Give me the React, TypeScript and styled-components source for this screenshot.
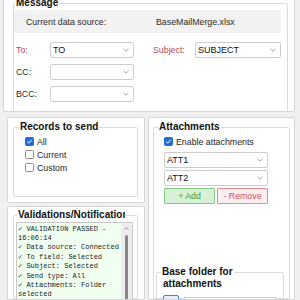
import React from 'react';
import styled, { createGlobalStyle } from 'styled-components';

const GlobalStyle = createGlobalStyle`
  html, body {
    margin: 0;
    padding: 0;
  }
  body {
    font-family: "Liberation Sans", Arial, sans-serif;
    font-size: 8.8px;
    color: #1e1e1e;
    background: #f0f0f0;
  }
`;

const Screen = styled.div`
  width: 300px;
  height: 300px;
  overflow: hidden;
  background: #f0f0f0;
  display: flex;
  flex-direction: column;
  gap: 5px;
`;

const Panel = styled.div<{ $height?: number }>`
  box-sizing: border-box;
  background: #fff;
  border: 1px solid #d6d6d6;
  border-radius: 2px;
  overflow: hidden;
  display: flex;
  flex-direction: column;
  ${p => (p.$height ? `height: ${p.$height}px; flex: none;` : 'flex: 1; min-height: 0;')}
`;

const TopPanel = styled(Panel)`
  margin: -10px 0 0 3px;
  width: 292px;
  padding-left: 9px;
  padding-top: 6px;
`;

const GroupBox = styled.fieldset`
  box-sizing: border-box;
  margin: 0;
  padding: 0;
  border: 1px solid #dadada;
  border-radius: 2px;
  min-width: 0;
  display: flex;
  flex-direction: column;
`;

const Legend = styled.legend<{ $indent: number; $clip?: number }>`
  margin-left: ${p => p.$indent}px;
  padding: 0 1px;
  font-weight: bold;
  font-size: 10px;
  line-height: 12px;
  color: #111;
  white-space: nowrap;
  overflow: hidden;
  ${p => (p.$clip ? `max-width: ${p.$clip}px;` : '')}
`;

const DataSource = styled.div`
  margin-top: 1px;
  height: 23px;
  width: 267px;
  background: #f2f2f2;
  display: grid;
  grid-template-columns: 130px 1fr;
  align-items: center;
  padding-left: 12px;
  box-sizing: border-box;
  color: #2a2a2a;
`;

const FieldGrid = styled.div`
  margin: 9px 0 20px 2px;
  display: grid;
  grid-template-columns: 34px 84px 19px 42px 86px;
  grid-auto-rows: 16px;
  row-gap: 6px;
  align-items: center;
`;

const Label = styled.span<{ $required?: boolean }>`
  color: ${p => (p.$required ? '#b84a4c' : '#2a2a2a')};
`;

const ComboBox = styled.div<{ $width?: number }>`
  box-sizing: border-box;
  height: 16px;
  ${p => (p.$width ? `width: ${p.$width}px;` : '')}
  border: 1px solid #cdcdcd;
  border-radius: 2px;
  background: #fff;
  display: flex;
  align-items: center;
  justify-content: space-between;
  padding: 0 4px 0 2px;
  font-size: 9px;
  color: #111;
`;

const Chevron = () => (
  <svg width="6" height="4" viewBox="0 0 6 4">
    <path d="M0.5 0.8 L3 3.2 L5.5 0.8" fill="none" stroke="#9a9a9a" strokeWidth="0.9" />
  </svg>
);

const Combo = ({ value, width }: { value?: string; width?: number }) => (
  <ComboBox $width={width}>
    <span>{value}</span>
    <Chevron />
  </ComboBox>
);

const Lower = styled.div`
  flex: 1;
  min-height: 0;
  display: flex;
  gap: 3px;
  margin-left: 7px;
`;

const LeftColumn = styled.div`
  width: 138px;
  display: flex;
  flex-direction: column;
  gap: 3px;
`;

const RecordsPanel = styled(Panel)`
  padding: 3px 6px 5px 5px;
`;

const ValidationPanel = styled(Panel)`
  padding: 2px 6px 0 5px;
`;

const RightPanel = styled(Panel)`
  width: 147px;
  flex: none;
  padding: 3px 4px 0 4px;
`;

const FillGroup = styled(GroupBox)`
  flex: 1;
  min-height: 0;
`;

const CheckList = styled.div<{ $indent: number }>`
  margin-top: 2px;
  padding-left: ${p => p.$indent}px;
  display: flex;
  flex-direction: column;
`;

const CheckRow = styled.label`
  height: 13px;
  display: flex;
  align-items: center;
  gap: 3px;
  color: #1e1e1e;
`;

const Box = styled.span<{ $checked?: boolean }>`
  box-sizing: border-box;
  width: 9px;
  height: 9px;
  border-radius: 1.5px;
  border: 1px solid ${p => (p.$checked ? '#1f6fd1' : '#8c8c8c')};
  background: ${p => (p.$checked ? '#1f6fd1' : '#fff')};
  display: flex;
  align-items: center;
  justify-content: center;
`;

const Check = ({ checked, label }: { checked?: boolean; label: string }) => (
  <CheckRow>
    <Box $checked={checked}>
      {checked && (
        <svg width="7" height="7" viewBox="0 0 7 7">
          <path d="M1.2 3.6 L2.8 5.1 L5.8 1.8" fill="none" stroke="#fff" strokeWidth="1" />
        </svg>
      )}
    </Box>
    {label}
  </CheckRow>
);

const AttachStack = styled.div`
  margin: 4px 0 0 10px;
  width: 104px;
  display: flex;
  flex-direction: column;
  gap: 2px;
`;

const ButtonRow = styled.div`
  display: flex;
  gap: 2px;
`;

const ActionButton = styled.button<{ $tone: 'add' | 'remove' }>`
  box-sizing: border-box;
  height: 16px;
  flex: 1;
  padding: 0;
  font-family: inherit;
  font-size: 8.8px;
  border-radius: 1px;
  border: 1px solid ${p => (p.$tone === 'add' ? '#83c983' : '#e68d92')};
  background: ${p => (p.$tone === 'add' ? '#d6f1d6' : '#fdeff0')};
  color: ${p => (p.$tone === 'add' ? '#3f9f3f' : '#d55058')};
`;

const FolderGroup = styled(GroupBox)`
  margin: 62px 0 0 2px;
  width: 128px;
  flex: 1;
`;

const SubTitle = styled.div`
  padding-left: 6px;
  font-weight: bold;
  font-size: 10px;
  line-height: 12px;
  color: #111;
`;

const FolderRow = styled.div`
  margin: 5px 0 0 6px;
  display: flex;
  align-items: flex-start;
  gap: 5px;
`;

const IconButton = styled.div`
  box-sizing: border-box;
  width: 16px;
  height: 16px;
  border: 1px solid #3f83d6;
  border-radius: 2px;
  background: #e6f0fb;
  display: flex;
  align-items: center;
  justify-content: center;
`;

const TextBox = styled.div`
  box-sizing: border-box;
  margin-top: 2px;
  width: 92px;
  height: 15px;
  border: 1px solid #cdcdcd;
  background: #fff;
`;

const LogBox = styled.div`
  box-sizing: border-box;
  margin: 1px 0 0 2px;
  width: 117px;
  flex: 1;
  display: flex;
  border: 1px solid #c9c9c9;
  background: #f0fff0;
`;

const LogText = styled.div`
  flex: 1;
  padding: 1.5px 0 0 1px;
  font-family: "Liberation Mono", "DejaVu Sans Mono", monospace;
  font-size: 7px;
  line-height: 9.4px;
  color: #222;
  white-space: pre;
  overflow: hidden;
`;

const ScrollTrack = styled.div`
  width: 11px;
  background: #ededed;
  display: flex;
  flex-direction: column;
  align-items: center;
  padding-top: 4px;
  gap: 5px;
`;

const ScrollThumb = styled.div`
  width: 3px;
  flex: 1;
  border-radius: 2px;
  background: #858585;
`;

const logLines = [
  '✓ VALIDATION PASSED -',
  '16:06:14',
  '✓ Data source: Connected',
  '✓ To field: Selected',
  '✓ Subject: Selected',
  '✓ Send type: All',
  '✓ Attachments: Folder',
  'selected',
];

export default function App() {
  return (
    <Screen>
      <GlobalStyle />
      <TopPanel $height={122}>
        <GroupBox style={{ width: 275 }}>
          <Legend $indent={1}>Message</Legend>
          <DataSource>
            <span>Current data source:</span>
            <span>BaseMailMerge.xlsx</span>
          </DataSource>
          <FieldGrid>
            <Label $required>To:</Label>
            <Combo value="TO" />
            <span />
            <Label $required>Subject:</Label>
            <Combo value="SUBJECT" />
            <Label>CC:</Label>
            <Combo />
            <span />
            <span />
            <span />
            <Label>BCC:</Label>
            <Combo />
          </FieldGrid>
        </GroupBox>
      </TopPanel>
      <Lower>
        <LeftColumn>
          <RecordsPanel $height={86}>
            <FillGroup>
              <Legend $indent={5}>Records to send</Legend>
              <CheckList $indent={11}>
                <Check checked label="All" />
                <Check label="Current" />
                <Check label="Custom" />
              </CheckList>
            </FillGroup>
          </RecordsPanel>
          <ValidationPanel>
            <FillGroup>
              <Legend $indent={3} $clip={106}>Validations/Notifications</Legend>
              <LogBox>
                <LogText>{logLines.join('\n')}</LogText>
                <ScrollTrack>
                  <svg width="5" height="3" viewBox="0 0 5 3">
                    <path d="M0.5 2.5 L2.5 0.6 L4.5 2.5" fill="none" stroke="#777" strokeWidth="0.8" />
                  </svg>
                  <ScrollThumb />
                </ScrollTrack>
              </LogBox>
            </FillGroup>
          </ValidationPanel>
        </LeftColumn>
        <RightPanel>
          <FillGroup>
            <Legend $indent={4}>Attachments</Legend>
            <CheckList $indent={10}>
              <Check checked label="Enable attachments" />
            </CheckList>
            <AttachStack>
              <Combo value="ATT1" />
              <Combo value="ATT2" />
              <ButtonRow>
                <ActionButton $tone="add">+ Add</ActionButton>
                <ActionButton $tone="remove">- Remove</ActionButton>
              </ButtonRow>
            </AttachStack>
            <FolderGroup>
              <Legend $indent={4}>Base folder for</Legend>
              <SubTitle>attachments</SubTitle>
              <FolderRow>
                <IconButton>
                  <svg width="10" height="8" viewBox="0 0 10 8">
                    <path d="M0.5 1 H4 L5 2 H9.5 V7.5 H0.5 Z" fill="#9aa7b4" />
                  </svg>
                </IconButton>
                <TextBox />
              </FolderRow>
            </FolderGroup>
          </FillGroup>
        </RightPanel>
      </Lower>
    </Screen>
  );
}
